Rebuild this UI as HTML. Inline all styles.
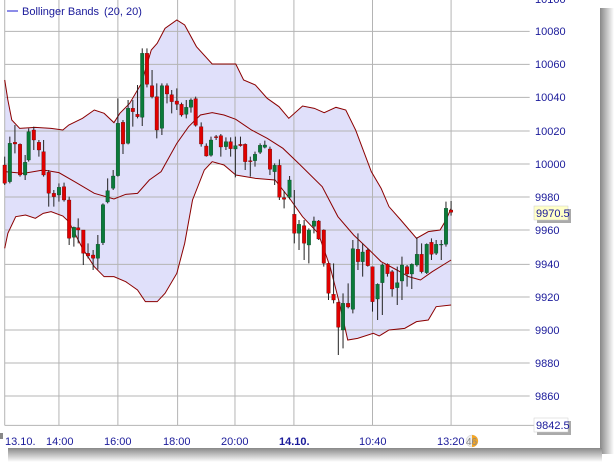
<!DOCTYPE html>
<html><head><meta charset="utf-8"><style>
body{margin:0;width:616px;height:466px;overflow:hidden;background:#fff;font-family:"Liberation Sans",sans-serif}
svg{position:absolute;left:0;top:0}
</style></head><body>
<svg width="616" height="466" viewBox="0 0 616 466">
<defs>
<linearGradient id="sr" x1="0" x2="1"><stop offset="0" stop-color="#888"/><stop offset="1" stop-color="#fff"/></linearGradient>
<linearGradient id="sb" x1="0" y1="0" x2="0" y2="1"><stop offset="0" stop-color="#888"/><stop offset="1" stop-color="#fff"/></linearGradient>
</defs>
<rect x="600" y="8" width="14" height="446" fill="url(#sr)"/>
<rect x="8" y="448" width="594" height="14" fill="url(#sb)"/>
<rect x="0" y="0" width="600" height="448" fill="#fff"/>
<rect x="0" y="433" width="3" height="6" fill="#888"/>
<g transform="scale(0.39293,0.33333)">
<polygon fill="#e0e0fa" points="12,240 20,300 30,360 50,385 90,382 130,385 160,390 175,375 210,355 240,330 265,340 290,368 305,340 330,310 360,250 385,150 400,130 420,85 450,60 470,75 500,140 540,192 600,192 620,240 650,255 680,295 710,320 735,355 770,318 800,325 825,338 855,322 880,330 905,390 945,515 970,565 990,620 1020,660 1060,715 1090,695 1120,690 1135,660 1148,625 1148,915 1110,920 1090,960 1060,965 1030,985 990,990 965,1008 950,1000 910,1015 885,1020 865,915 840,800 810,700 770,650 740,600 700,540 650,535 600,525 570,495 540,485 520,510 490,600 470,730 450,820 420,880 400,905 370,905 350,870 320,845 290,830 265,830 240,800 210,745 175,665 160,648 130,635 110,640 90,655 65,645 40,650 20,700 12,745"/>
<g stroke="#b4b4b4" stroke-width="1" vector-effect="non-scaling-stroke" fill="none">
<path vector-effect="non-scaling-stroke" d="M12 94H1348M12 193H1348M12 292H1348M12 393H1348M12 492H1348M12 591H1348M12 690H1348M12 793H1348M12 891H1348M12 990H1348M12 1089H1348M12 1188H1348M12 1276H1400M12 0V1276M150 0V1276M300 0V1276M452 0V1276M598 0V1276M748 0V1276M948 0V1276M1148 0V1276"/>
</g>
<g fill="none" stroke="#8b0000" stroke-width="1">
<polyline vector-effect="non-scaling-stroke" points="12,240 20,300 30,360 50,385 90,382 130,385 160,390 175,375 210,355 240,330 265,340 290,368 305,340 330,310 360,250 385,150 400,130 420,85 450,60 470,75 500,140 540,192 600,192 620,240 650,255 680,295 710,320 735,355 770,318 800,325 825,338 855,322 880,330 905,390 945,515 970,565 990,620 1020,660 1060,715 1090,695 1120,690 1135,660 1148,625"/>
<polyline vector-effect="non-scaling-stroke" points="12,745 20,700 40,650 65,645 90,655 110,640 130,635 160,648 175,665 210,745 240,800 265,830 290,830 320,845 350,870 370,905 400,905 420,880 450,820 470,730 490,600 520,510 540,485 570,495 600,525 650,535 700,540 740,600 770,650 810,700 840,800 865,915 885,1020 910,1015 950,1000 965,1008 990,990 1030,985 1060,965 1090,960 1110,920 1148,915"/>
<polyline vector-effect="non-scaling-stroke" points="12,515 60,520 110,510 150,518 190,545 240,580 290,597 320,583 350,580 380,540 410,515 450,430 480,380 510,345 540,338 570,345 600,358 640,390 680,415 720,445 760,490 820,560 860,650 900,705 940,750 970,785 1010,810 1040,830 1070,840 1100,815 1148,780"/>
</g>
<g stroke="#222" stroke-width="1">
<path vector-effect="non-scaling-stroke" d="M12 470V555M25 410V550M38 375V460M51 430V530M64 465V540M73 385V485M86 380V450M99 420V470M111 420V530M124 510V620M137 570V620M150 550V605M163 548V605M176 590V735M188 680V740M199 655V730M212 690V795M224 730V775M237 750V810M249 705V808M262 610V735M274 535V610M288 510V570M300 295V530M313 360V462M326 300V433M338 300V380M350 255V355M362 145V378M374 145V262M387 210V295M399 250V415M412 250V405M425 250V310M437 270V340M450 265V330M462 308V350M474 300V355M486 295V338M498 290V380M512 367V440M525 430V470M537 410V470M550 405V420M562 402V470M575 412V450M587 412V470M599 410V532M612 410V440M624 430V510M637 470V530M649 455V500M662 430V462M674 422V445M687 440V525M699 490V555M711 478V600M723 573V625M737 528V598M749 570V730M761 660V750M774 660V780M786 685V790M799 650V700M811 660V720M824 688V800M836 790V900M849 790V910M861 905V1065M873 880V1045M886 850V925M898 720V940M911 700V810M923 730V830M936 745V800M948 800V935M961 850V960M973 790V945M986 790V830M998 810V890M1011 800V915M1023 770V900M1036 795V860M1048 790V867M1061 712V800M1073 730V820M1086 730V822M1098 715V780M1110 720V765M1123 720V780M1135 605V740M1148 603V647"/>
</g>
<g fill="#e00000" stroke="#400" stroke-width="0.8">
<rect x="7.5" y="495" width="9" height="55"/><rect x="33.5" y="427" width="9" height="5"/><rect x="46.5" y="433" width="9" height="92"/><rect x="81.5" y="390" width="9" height="30"/><rect x="94.5" y="427" width="9" height="23"/><rect x="106.5" y="455" width="9" height="70"/><rect x="119.5" y="517" width="9" height="63"/><rect x="132.5" y="580" width="9" height="10"/><rect x="158.5" y="560" width="9" height="40"/><rect x="171.5" y="600" width="9" height="115"/><rect x="194.5" y="683" width="9" height="7"/><rect x="207.5" y="690" width="9" height="70"/><rect x="219.5" y="760" width="9" height="8"/><rect x="232.5" y="765" width="9" height="10"/><rect x="308.5" y="367" width="9" height="65"/><rect x="333.5" y="325" width="9" height="10"/><rect x="345.5" y="343" width="9" height="7"/><rect x="369.5" y="160" width="9" height="93"/><rect x="382.5" y="257" width="9" height="33"/><rect x="394.5" y="290" width="9" height="100"/><rect x="420.5" y="257" width="9" height="25"/><rect x="432.5" y="284" width="9" height="21"/><rect x="445.5" y="303" width="9" height="10"/><rect x="457.5" y="313" width="9" height="32"/><rect x="493.5" y="296" width="9" height="80"/><rect x="507.5" y="380" width="9" height="52"/><rect x="520.5" y="438" width="9" height="30"/><rect x="545.5" y="410" width="9" height="3"/><rect x="557.5" y="407" width="9" height="34"/><rect x="582.5" y="425" width="9" height="21"/><rect x="607.5" y="433" width="9" height="4"/><rect x="619.5" y="433" width="9" height="52"/><rect x="632.5" y="482" width="9" height="3"/><rect x="682.5" y="447" width="9" height="61"/><rect x="706.5" y="496" width="9" height="96"/><rect x="718.5" y="593" width="9" height="5"/><rect x="744.5" y="643" width="9" height="57"/><rect x="769.5" y="677" width="9" height="53"/><rect x="806.5" y="663" width="9" height="54"/><rect x="819.5" y="690" width="9" height="100"/><rect x="831.5" y="790" width="9" height="90"/><rect x="844.5" y="883" width="9" height="17"/><rect x="856.5" y="907" width="9" height="75"/><rect x="881.5" y="910" width="9" height="11"/><rect x="906.5" y="748" width="9" height="37"/><rect x="931.5" y="750" width="9" height="47"/><rect x="943.5" y="800" width="9" height="105"/><rect x="981.5" y="793" width="9" height="28"/><rect x="993.5" y="815" width="9" height="52"/><rect x="1031.5" y="800" width="9" height="22"/><rect x="1068.5" y="763" width="9" height="52"/><rect x="1093.5" y="727" width="9" height="36"/><rect x="1143.5" y="630" width="9" height="7"/>
</g>
<g fill="#0a7a3a" stroke="#031" stroke-width="0.8">
<rect x="20.5" y="430" width="9" height="115"/><rect x="59.5" y="487" width="9" height="38"/><rect x="68.5" y="395" width="9" height="85"/><rect x="145.5" y="562" width="9" height="23"/><rect x="183.5" y="682" width="9" height="30"/><rect x="244.5" y="733" width="9" height="42"/><rect x="257.5" y="614" width="9" height="114"/><rect x="269.5" y="572" width="9" height="34"/><rect x="283.5" y="528" width="9" height="37"/><rect x="295.5" y="370" width="9" height="157"/><rect x="321.5" y="325" width="9" height="105"/><rect x="357.5" y="160" width="9" height="192"/><rect x="407.5" y="257" width="9" height="128"/><rect x="469.5" y="322" width="9" height="21"/><rect x="481.5" y="300" width="9" height="22"/><rect x="532.5" y="420" width="9" height="46"/><rect x="570.5" y="425" width="9" height="15"/><rect x="594.5" y="437" width="9" height="10"/><rect x="644.5" y="463" width="9" height="19"/><rect x="657.5" y="436" width="9" height="21"/><rect x="669.5" y="435" width="9" height="7"/><rect x="694.5" y="496" width="9" height="19"/><rect x="732.5" y="540" width="9" height="52"/><rect x="756.5" y="673" width="9" height="27"/><rect x="781.5" y="690" width="9" height="45"/><rect x="794.5" y="663" width="9" height="16"/><rect x="868.5" y="910" width="9" height="80"/><rect x="893.5" y="746" width="9" height="182"/><rect x="918.5" y="756" width="9" height="29"/><rect x="956.5" y="853" width="9" height="44"/><rect x="968.5" y="795" width="9" height="53"/><rect x="1006.5" y="848" width="9" height="15"/><rect x="1018.5" y="795" width="9" height="48"/><rect x="1043.5" y="793" width="9" height="29"/><rect x="1056.5" y="763" width="9" height="32"/><rect x="1081.5" y="733" width="9" height="85"/><rect x="1105.5" y="733" width="9" height="27"/><rect x="1118.5" y="733" width="9" height="2"/><rect x="1130.5" y="625" width="9" height="108"/>
</g>
</g>
<line x1="7" y1="11" x2="18" y2="11" stroke="#1a1ad0" stroke-width="1"/>
<g font-family="Liberation Sans, sans-serif" font-size="11" fill="#1a1a9a">
<text x="22" y="15">Bollinger Bands</text><text x="104" y="15">(20, 20)</text>
<text x="535" y="3">10100</text>
<text x="535" y="35">10080</text><text x="535" y="68">10060</text><text x="535" y="101">10040</text><text x="535" y="135">10020</text><text x="535" y="168">10000</text>
<text x="535" y="201">9980</text><text x="535" y="234">9960</text><text x="535" y="268">9940</text><text x="535" y="301">9920</text><text x="535" y="334">9900</text><text x="535" y="367">9880</text><text x="535" y="400">9860</text>
<text x="5" y="445">13.10.</text><text x="46" y="445">14:00</text><text x="104" y="445">16:00</text><text x="163" y="445">18:00</text><text x="221" y="445">20:00</text><text x="279" y="445" font-weight="bold">14.10.</text><text x="359" y="445">10:40</text><text x="437" y="445">13:20</text>
</g>
<rect x="537" y="209" width="34" height="14" fill="#aaa"/>
<rect x="534" y="206" width="34" height="14" fill="#ffffc8" stroke="#ccc" stroke-width="0.5"/>
<text x="536" y="217" font-family="Liberation Sans, sans-serif" font-size="11" fill="#1a1a9a">9970.5</text>
<rect x="537" y="421" width="34" height="14" fill="#aaa"/>
<rect x="534" y="418" width="34" height="14" fill="#fff" stroke="#ccc" stroke-width="0.5"/>
<text x="536" y="429" font-family="Liberation Sans, sans-serif" font-size="11" fill="#1a1a9a">9842.5</text>
<circle cx="472" cy="441" r="6" fill="#eee" stroke="#ccc" stroke-width="0.5"/>
<path d="M472 435A6 6 0 0 1 472 447Z" fill="#f5a623"/>
<text x="466" y="445" font-family="Liberation Sans, sans-serif" font-size="10" fill="#888">46</text>
</svg>
</body></html>
